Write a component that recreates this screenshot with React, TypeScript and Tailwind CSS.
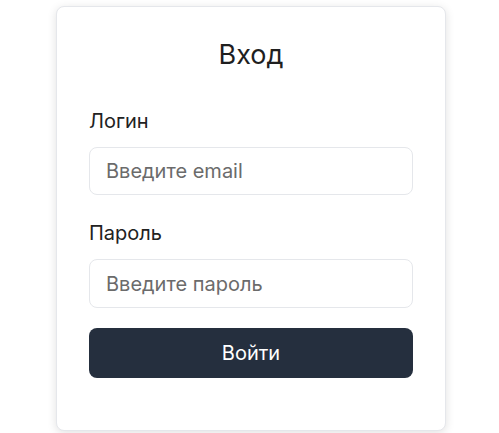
export default function App() {
  return (
    <div className="min-h-screen bg-white font-['Inter',sans-serif] pl-[56px] pr-[53px] pt-[6px]">
      <div className="w-[390px] h-[425px] rounded-[8px] border border-gray-200 bg-white px-[32px] pt-[30px] shadow-[0_2px_10px_rgba(0,0,0,0.12)]">
        <h1 className="text-center text-[27px] leading-[36px] text-[#1f1f1f]">Вход</h1>
        <form className="mt-[36px] flex flex-col" onSubmit={(e) => e.preventDefault()}>
          <label className="text-[20px] leading-[24px] text-[#222]">Логин</label>
          <input
            type="email"
            placeholder="Введите email"
            className="mt-[14px] h-[48px] rounded-[8px] border border-gray-200 px-[16px] text-[20px] placeholder:text-[#6b6b6b] outline-none"
          />
          <label className="mt-[26px] text-[20px] leading-[24px] text-[#222]">Пароль</label>
          <input
            type="password"
            placeholder="Введите пароль"
            className="mt-[14px] h-[49px] rounded-[8px] border border-gray-200 px-[16px] text-[20px] placeholder:text-[#6b6b6b] outline-none"
          />
          <button
            type="submit"
            className="mt-[20px] h-[50px] rounded-[8px] bg-[#252f3e] text-[20px] text-white"
          >
            Войти
          </button>
        </form>
      </div>
    </div>
  );
}
